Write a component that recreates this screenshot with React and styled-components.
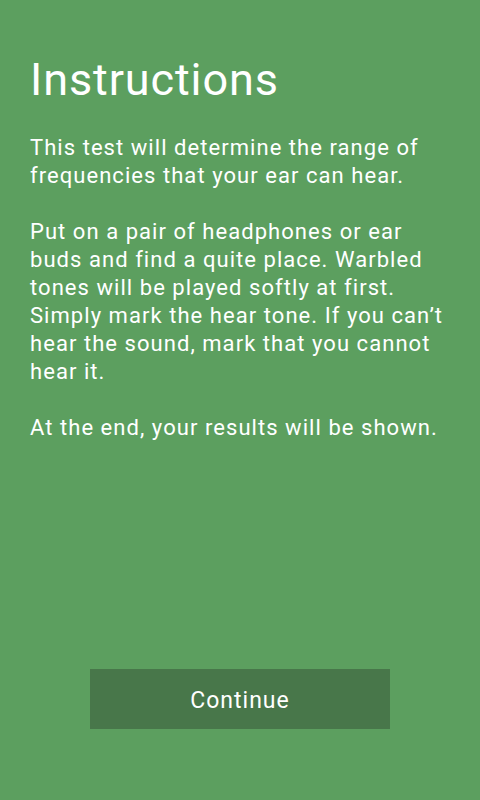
import React from 'react';
import styled, { createGlobalStyle } from 'styled-components';

const GlobalStyle = createGlobalStyle`
  html, body {
    margin: 0;
    padding: 0;
    background: #5c9f5f;
  }
  * {
    box-sizing: border-box;
  }
`;

const Screen = styled.div`
  display: flex;
  flex-direction: column;
  min-height: 800px;
  padding: 52px 26px 71px 30px;
  background: #5c9f5f;
  color: #ffffff;
  font-family: Roboto, "Noto Sans", sans-serif;
`;

const Title = styled.h1`
  margin: 0 0 26px 0;
  font-size: 45px;
  font-weight: 400;
  line-height: 56px;
  letter-spacing: 0.9px;
`;

const Paragraph = styled.p`
  margin: 0 0 28px 0;
  font-size: 22px;
  line-height: 28px;
  font-weight: 400;
  letter-spacing: 1.05px;
`;

const Footer = styled.div`
  margin-top: auto;
  display: flex;
  justify-content: center;
  padding-right: 4px;
`;

const ContinueButton = styled.button`
  width: 300px;
  height: 60px;
  padding: 2px 0 0 0;
  border: none;
  background: #48774a;
  color: #ffffff;
  font-family: Roboto, "Noto Sans", sans-serif;
  font-size: 23px;
  letter-spacing: 1px;
  cursor: pointer;
`;

const App = () => {
  return (
    <>
      <GlobalStyle />
      <Screen>
        <Title>Instructions</Title>
        <Paragraph>
          This test will determine the range of frequencies that your ear can hear.
        </Paragraph>
        <Paragraph>
          Put on a pair of headphones or ear buds and find a quite place. Warbled
          tones will be played softly at first. Simply mark the hear tone. If you
          can’t hear the sound, mark that you cannot hear it.
        </Paragraph>
        <Paragraph>At the end, your results will be shown.</Paragraph>
        <Footer>
          <ContinueButton>Continue</ContinueButton>
        </Footer>
      </Screen>
    </>
  );
};

export default App;
